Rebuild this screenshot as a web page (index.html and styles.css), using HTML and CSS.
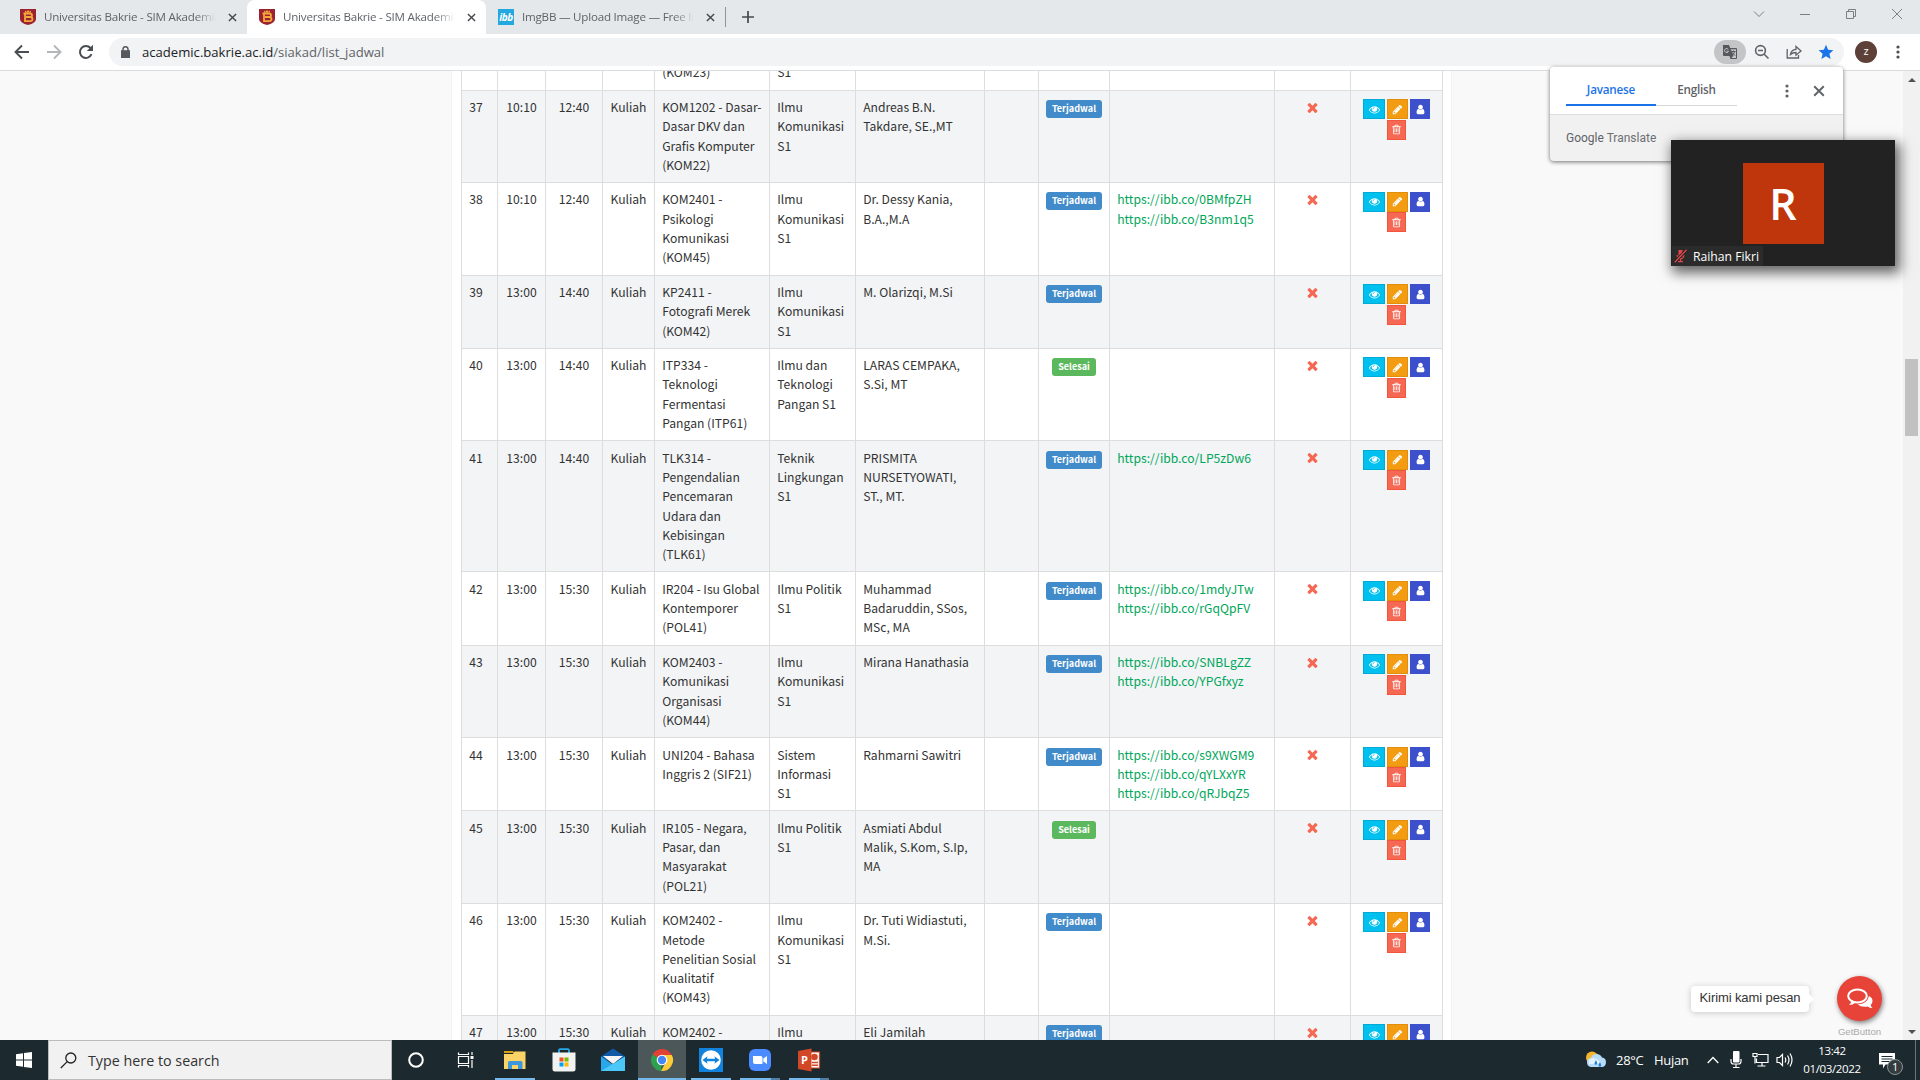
FILE: index.html
```html
<!DOCTYPE html>
<html lang="id">
<head>
    <meta charset="UTF-8">
    <meta name="viewport" content="width=device-width, initial-scale=1.0">
    <title>Universitas Bakrie - SIM Akademik</title>
    <link rel="stylesheet" href="styles.css">
</head>
<body>
    <svg class="sprite">
        <symbol id="eye" viewBox="0 0 1792 1792"><path d="M1664 960q-152-236-381-353 61 104 61 225 0 185-131.500 316.500t-316.500 131.500-316.500-131.500-131.500-316.500q0-121 61-225-229 117-381 353 133 205 333.500 326.500t434.500 121.500 434.500-121.500 333.500-326.500zm-720-384q0-20-14-34t-34-14q-125 0-214.500 89.500t-89.500 214.500q0 20 14 34t34 14 34-14 14-34q0-86 61-147t147-61q20 0 34-14t14-34zm848 384q0 34-20 69-140 230-376.500 368.500t-499.500 138.500-499.500-139-376.500-368q-20-35-20-69t20-69q140-229 376.500-368t499.500-139 499.500 139 376.500 368q20 35 20 69z"/></symbol>
        <symbol id="pencil" viewBox="0 0 1792 1792"><path d="M491 1536l91-91-235-235-91 91v107h128v128h107zm523-928q0-22-22-22-10 0-17 7l-542 542q-7 7-7 17 0 22 22 22 10 0 17-7l542-542q7-7 7-17zm-54-192l416 416-832 832h-416v-416zm683 96q0 53-37 90l-166 166-416-416 166-165q36-38 90-38 53 0 91 38l235 234q37 39 37 91z"/></symbol>
        <symbol id="user" viewBox="0 0 1792 1792"><path d="M1536 1399q0 109-62.500 187t-150.500 78h-854q-88 0-150.500-78t-62.500-187q0-85 8.500-160.500t31.500-152 58.500-131 94-89 134.500-34.500q131 128 313 128t313-128q76 0 134.500 34.500t94 89 58.500 131 31.500 152 8.500 160.500zm-256-887q0 159-112.500 271.500t-271.500 112.500-271.500-112.500-112.500-271.500 112.500-271.500 271.500-112.500 271.500 112.500 112.500 271.500z"/></symbol>
        <symbol id="trash" viewBox="0 0 1792 1792"><path d="M704 736v576q0 14-9 23t-23 9h-64q-14 0-23-9t-9-23v-576q0-14 9-23t23-9h64q14 0 23 9t9 23zm256 0v576q0 14-9 23t-23 9h-64q-14 0-23-9t-9-23v-576q0-14 9-23t23-9h64q14 0 23 9t9 23zm256 0v576q0 14-9 23t-23 9h-64q-14 0-23-9t-9-23v-576q0-14 9-23t23-9h64q14 0 23 9t9 23zm128 724v-948h-896v948q0 22 7 40.500t14.500 27 10.500 8.500h832q3 0 10.500-8.500t14.500-27 7-40.500zm-672-1076h448l-48-117q-7-9-17-11h-317q-10 2-17 11zm928 32v64q0 14-9 23t-23 9h-96v948q0 83-47 143.500t-113 60.500h-832q-66 0-113-58.500t-47-141.500v-952h-96q-14 0-23-9t-9-23v-64q0-14 9-23t23-9h309l70-167q15-37 54-63t79-26h320q40 0 79 26t54 63l70 167h309q14 0 23 9t9 23z"/></symbol>
        <symbol id="times" viewBox="0 0 1792 1792"><path d="M1490 1322q0 40-28 68l-136 136q-28 28-68 28t-68-28l-294-294-294 294q-28 28-68 28t-68-28l-136-136q-28-28-28-68t28-68l294-294-294-294q-28-28-28-68t28-68l136-136q28-28 68-28t68 28l294 294 294-294q28-28 68-28t68 28l136 136q28 28 28 68t-28 68l-294 294 294 294q28 28 28 68z"/></symbol>
        <symbol id="crest" viewBox="0 0 16 16"><path fill="#9b2330" d="M0 0h16v10q0 4-8 6Q0 14 0 10z"/><path fill="none" stroke="#f3a93c" stroke-width="1.800" d="M3.500 4.500h6.500q2 0 2 1.700T10 8H6h4q2.500 0 2.500 2t-2.500 2.200H5V4.500"/><path fill="#f3a93c" d="M5 1.500l1.500 1.200L8 1l1.500 1.700L11 1.500v2H5z"/></symbol>
        <symbol id="close" viewBox="0 0 10 10"><path fill="none" stroke="currentColor" stroke-width="1.600" d="M1 1l8 8M9 1L1 9"/></symbol>
        <symbol id="dots" viewBox="0 0 4 14"><circle cx="2" cy="2" r="1.600"/><circle cx="2" cy="7" r="1.600"/><circle cx="2" cy="12" r="1.600"/></symbol>
    </svg>

    <div class="tab-strip">
        <div class="tab">
            <svg class="favicon"><use href="#crest"/></svg>
            <span class="tab-title">Universitas Bakrie - SIM Akademik</span>
            <svg class="tab-close"><use href="#close"/></svg>
        </div>
        <div class="tab active">
            <svg class="favicon"><use href="#crest"/></svg>
            <span class="tab-title">Universitas Bakrie - SIM Akademik</span>
            <svg class="tab-close"><use href="#close"/></svg>
        </div>
        <div class="tab">
            <span class="favicon ibb">ibb</span>
            <span class="tab-title">ImgBB — Upload Image — Free Image</span>
            <svg class="tab-close"><use href="#close"/></svg>
        </div>
        <div class="new-tab">
            <svg width="12" height="12" viewBox="0 0 12 12"><path stroke="#45494d" stroke-width="1.700" d="M6 0v12M0 6h12"/></svg>
        </div>
        <div class="window-buttons">
            <svg viewBox="0 0 12 12"><path d="M1 3.500l5 5 5-5"/></svg>
            <svg viewBox="0 0 12 12"><path d="M1 6.500h10"/></svg>
            <svg viewBox="0 0 12 12"><path d="M1.500 3.500h7v7h-7zM3.500 3.500v-2h7v7h-2"/></svg>
            <svg viewBox="0 0 12 12"><path d="M1 1l10 10M11 1L1 11"/></svg>
        </div>
    </div>

    <div class="toolbar">
        <div class="nav-buttons">
            <svg width="16" height="16" viewBox="0 0 16 16"><path fill="none" stroke="#4a4d51" stroke-width="1.900" d="M15 8H2M8 1.500L1.500 8 8 14.500"/></svg>
            <svg width="16" height="16" viewBox="0 0 16 16"><path fill="none" stroke="#b4b7ba" stroke-width="1.900" d="M1 8h13M8 1.500L14.500 8 8 14.500"/></svg>
            <svg width="16" height="16" viewBox="0 0 16 16"><path fill="none" stroke="#4a4d51" stroke-width="2" d="M13.500 10.200A6 6 0 1 1 12.500 4L14 5.500"/><path fill="#4a4d51" d="M15 .8v6.200H8.800z"/></svg>
        </div>
        <div class="omnibox">
            <svg class="lock" width="9" height="12" viewBox="0 0 9 12"><path fill="#55595d" d="M0 4.200h9V12H0z"/><path fill="none" stroke="#55595d" stroke-width="1.500" d="M2 5V3a2.500 2.300 0 0 1 5 0v2"/></svg>
            <span class="url"><b>academic.bakrie.ac.id</b>/siakad/list_jadwal</span>
            <div class="omnibox-icons">
                <span class="translate-pill">
                    <svg width="16" height="16" viewBox="0 0 16 16"><path fill="#55595d" d="M1 1h6l1.200 3H14a1 1 0 0 1 1 1v9a1 1 0 0 1-1 1H8.500l-1-3H2a1 1 0 0 1-1-1z"/><path fill="#c3c5c7" d="M8.800 5.200H14V14H9.500l2-2.500z"/><path fill="none" stroke="#c3c5c7" d="M6.300 5.500A2 2 0 1 0 6.500 7.200H4.700"/><path fill="none" stroke="#55595d" d="M9.500 7.500h4M11.500 6.500v1M12.800 7.500q-.8 2.500-2.800 3.500M10.300 8.500l2.700 3"/></svg>
                </span>
                <svg width="16" height="16" viewBox="0 0 16 16"><path fill="none" stroke="#5f6368" stroke-width="1.600" d="M10.200 10.200l4.300 4.300M4 6.500h5"/><circle cx="6.500" cy="6.500" r="4.900" fill="none" stroke="#5f6368" stroke-width="1.600"/></svg>
                <svg width="16" height="16" viewBox="0 0 16 16"><path fill="none" stroke="#5f6368" stroke-width="1.300" d="M1.200 5v9h11.300v-3M4.500 10.500Q5 5.800 10 5.300V2.500L15 7l-5 4.200V8.500q-3.500 0-5.500 2z"/></svg>
                <svg width="16" height="16" viewBox="0 0 16 16"><path fill="#1a73e8" d="M8 .8l2.100 5 5.300.4-4 3.500 1.200 5.300L8 12.200 3.400 15l1.200-5.300-4-3.500 5.300-.4z"/></svg>
            </div>
        </div>
        <span class="avatar">z</span>
        <svg class="menu-dots" width="4" height="14"><use href="#dots"/></svg>
    </div>

    <div class="viewport">
        <div class="page">
            <div class="box">
                <table class="schedule">
                    <colgroup>
                        <col class="c-no"><col class="c-start"><col class="c-end"><col class="c-type">
                        <col class="c-course"><col class="c-prodi"><col class="c-lecturer"><col class="c-room">
                        <col class="c-status"><col class="c-proof"><col class="c-check"><col class="c-action">
                    </colgroup>
                    <tbody id="rows">
                        <!-- Schedule rows will be inserted here -->
                    </tbody>
                </table>
            </div>
        </div>
        <div class="scrollbar">
            <span class="arrow up"></span>
            <span class="thumb"></span>
            <span class="arrow down"></span>
        </div>

        <div class="chat">
            <span class="chat-tip">Kirimi kami pesan</span>
            <div class="chat-button">
                <svg width="26" height="22" viewBox="0 0 26 22"><path fill="#fff" d="M22 8q3.500 1.500 3.500 5 0 2.300-1.800 4 .3 1.800 1.800 3-3 0-4.700-1.500-6.300 1.200-10.300-2.300Q20 16.500 22 8z"/><ellipse cx="10.500" cy="8" rx="9.300" ry="6.600" fill="#e84339" stroke="#fff" stroke-width="2"/><path fill="#fff" d="M4.500 12.500Q4.500 15 2 17q4 0 6.500-2.500z"/></svg>
            </div>
            <span class="chat-brand">GetButton</span>
        </div>
    </div>

    <div class="translate">
        <div class="translate-head">
            <span class="lang on">Javanese</span>
            <span class="lang">English</span>
            <svg class="translate-dots" width="4" height="14"><use href="#dots"/></svg>
            <svg class="translate-close" width="12" height="12"><use href="#close"/></svg>
        </div>
        <div class="translate-foot"><b>Google</b> Translate</div>
    </div>

    <div class="meeting">
        <span class="meeting-avatar">R</span>
        <span class="meeting-name">
            <svg width="13" height="14" viewBox="0 0 13 14"><path fill="#e0484d" d="M4.500 1h4v7h-4zM2.500 6h1.200q0 3 2.800 3t2.800-3h1.200q0 3.500-3.300 4.200V12H9v1.200H4V12h1.800v-1.800Q2.500 9.500 2.500 6z"/><path stroke="#222" stroke-width="3" d="M.8 13.200L12.500.8"/><path stroke="#e0484d" stroke-width="1.400" d="M.8 13.200L12.500.8"/></svg>
            Raihan Fikri
        </span>
    </div>

    <div class="taskbar">
        <div class="start">
            <svg width="16" height="16" viewBox="0 0 16 16"><path fill="#fff" d="M0 2.200l7-1v6.300H0zM8 1l8-1v7.500H8zM0 8.500h7v6.300l-7-1zM8 8.500h8V16l-8-1z"/></svg>
        </div>
        <div class="search">
            <svg width="17" height="17" viewBox="0 0 17 17"><circle cx="10.800" cy="6" r="5" fill="none" stroke="#222" stroke-width="1.300"/><path stroke="#222" stroke-width="1.300" d="M7.200 9.600L.8 16"/></svg>
            <span>Type here to search</span>
        </div>
        <div class="apps">
            <div class="app system"><svg width="18" height="18" viewBox="0 0 18 18"><circle cx="9" cy="9" r="6.800" fill="none" stroke="#fff" stroke-width="2"/></svg></div>
            <div class="app system"><svg width="18" height="18" viewBox="0 0 18 18"><path fill="none" stroke="#fff" stroke-width="1.200" d="M1.500 1.500v2h10v-2M1.500 16.500v-2h10v2M1.500 5.500h10v7h-10zM15 1v3M15 9v8"/><path fill="#fff" d="M13.500 5h3v3h-3z"/></svg></div>
            <div class="app running"><svg width="22" height="20" viewBox="0 0 22 20"><path fill="#d9a013" d="M0 1h9l1.500 2H0z"/><path fill="#fbd468" d="M0 4h9l1.500-2.500H21.500V19H0z"/><path fill="#3d97dc" d="M4 19v-6.500q0-1.500 1.500-1.500H17q1.500 0 1.500 1.500V19H14v-4H8v4z"/></svg></div>
            <div class="app"><svg width="24" height="24" viewBox="0 0 24 24"><path fill="none" stroke="#27a8e8" stroke-width="1.800" d="M7 6V2.500Q7 1.200 8.200 1.200h7.600Q17 1.200 17 2.500V6"/><path fill="#f2f2f2" d="M.5 4.500h23V21q0 2.500-2.500 2.500H3Q.5 23.500.5 21z"/><path fill="#f25022" d="M7.500 9.500h4v4h-4z"/><path fill="#7fba00" d="M12.500 9.500h4v4h-4z"/><path fill="#00a4ef" d="M7.500 14.500h4v4h-4z"/><path fill="#ffb900" d="M12.500 14.500h4v4h-4z"/></svg></div>
            <div class="app"><svg width="24" height="24" viewBox="0 0 24 24"><path fill="#0f5aa8" d="M0 8.500L12 .5l12 8V12H0z"/><path fill="#f4f4f4" d="M2 8h20l-10 8z"/><path fill="#28a8ea" d="M0 8.500L14 18v5H0z"/><path fill="#4cc8f8" d="M24 8.500V23H0z"/></svg></div>
            <div class="app current"><svg width="24" height="24" viewBox="0 0 24 24"><path fill="#e04336" d="M12 12L2.500 6.500a11 11 0 0 1 19 0z"/><path fill="#2da14d" d="M12 12L11 23A11 11 0 0 1 2.500 6.500z"/><path fill="#fccb35" d="M12 7h9.800A11 11 0 0 1 11 23l5-9z"/><circle cx="12" cy="12" r="5.300" fill="#fff"/><circle cx="12" cy="12" r="4.200" fill="#4486f4"/></svg></div>
            <div class="app running"><svg width="24" height="24" viewBox="0 0 24 24"><path fill="#1283dc" d="M0 0h24v24H0z"/><circle cx="12" cy="12" r="9.800" fill="#fff"/><path fill="#1283dc" d="M3.500 12l5-3.800-.6 2.600h8.200l-.6-2.600 5 3.800-5 3.800.6-2.600H7.900l.6 2.600z"/></svg></div>
            <div class="app running stacked"><svg width="22" height="22" viewBox="0 0 22 22"><rect width="22" height="22" rx="6" fill="#4a8cff"/><path fill="#fff" d="M4 7h7.500q2 0 2 2v6H6q-2 0-2-2zM14.300 9.500L18 7v8l-3.700-2.500z"/></svg></div>
            <div class="app running stacked"><svg width="24" height="24" viewBox="0 0 24 24"><path fill="#fff" stroke="#d24726" stroke-width="1.200" d="M13 4h9.500v16H13z"/><path stroke="#d24726" stroke-width="1.500" d="M15 14.500h6M15 17.300h6"/><circle cx="17.500" cy="9" r="3.300" fill="#d24726"/><path fill="#d24726" d="M1 3l13.500-2.500v23L1 21z"/></svg><span class="ppt-letter">P</span></div>
        </div>
        <div class="tray">
            <svg class="weather" width="22" height="18" viewBox="0 0 22 18"><circle cx="7" cy="6.500" r="6" fill="#f7b52e"/><path fill="#b7dcf7" d="M6 16a4.700 4.700 0 0 1 0-9.300A6 6 0 0 1 17 6.500a4.800 4.800 0 0 1-.3 9.500z"/><path fill="#e3f2fd" d="M4 9q4-4 9 0 4 3-1 4H4z"/><path fill="#2380d6" d="M9.500 12l1.500-3 1.200 3a1.400 1.400 0 1 1-2.700 0zM13.500 14l1.500-3 1.200 3a1.400 1.400 0 1 1-2.700 0z"/></svg>
            <span class="temp">28°C</span>
            <span class="sky">Hujan</span>
            <svg class="caret" width="12" height="8" viewBox="0 0 12 8"><path fill="none" stroke="#fff" stroke-width="1.300" d="M.7 7L6 1.500 11.300 7"/></svg>
            <svg class="mic" width="12" height="18" viewBox="0 0 12 18"><rect x="3" y="0" width="6.500" height="11.500" rx="1" fill="#fff"/><path fill="none" stroke="#fff" stroke-width="1.200" d="M1 8v2.500q0 2.500 2.500 2.500h5q2.500 0 2.500-2.500V8M6 13v3M3 16.500h6.500"/></svg>
            <svg class="net" width="17" height="16" viewBox="0 0 17 16"><path fill="none" stroke="#fff" stroke-width="1.200" d="M6 2.500h10v8H4.500v-4M10 10.500v3M5.500 14h8M1 1.500h4v3H1zM3 4.500v7"/></svg>
            <svg class="vol" width="17" height="16" viewBox="0 0 17 16"><path fill="none" stroke="#fff" stroke-width="1.200" d="M1 5.500h2.500l3-3v11l-3-3H1zM9 5.500q1.500 2.500 0 5M11.500 3.500q3 4.500 0 9M14 1.500q4 6.500 0 13"/></svg>
            <div class="clock"><span>13:42</span><span>01/03/2022</span></div>
            <div class="notice">
                <svg width="16" height="17" viewBox="0 0 16 17"><path fill="#fff" d="M0 1h16v11.500H6.500L4 16.500v-4H0z"/><path stroke="#1c2a2f" d="M2.500 4.500h11M2.500 7h11M2.500 9.500h8"/></svg>
                <span class="notice-count">1</span>
            </div>
        </div>
    </div>

    <script>
        // Class schedule, one entry per meeting
        const schedule = [
            { no: 36, start: '10:10', end: '12:40', course: ['KOM1202 - Dasar', 'DKV', '(KOM23)'], prodi: ['Ilmu', 'Komunikasi', 'S1'], lecturer: [], done: false, proof: [] },
            { no: 37, start: '10:10', end: '12:40', course: ['KOM1202 - Dasar-', 'Dasar DKV dan', 'Grafis Komputer', '(KOM22)'], prodi: ['Ilmu', 'Komunikasi', 'S1'], lecturer: ['Andreas B.N.', 'Takdare, SE.,MT'], done: false, proof: [] },
            { no: 38, start: '10:10', end: '12:40', course: ['KOM2401 -', 'Psikologi', 'Komunikasi', '(KOM45)'], prodi: ['Ilmu', 'Komunikasi', 'S1'], lecturer: ['Dr. Dessy Kania,', 'B.A.,M.A'], done: false, proof: ['https://ibb.co/0BMfpZH', 'https://ibb.co/B3nm1q5'] },
            { no: 39, start: '13:00', end: '14:40', course: ['KP2411 -', 'Fotografi Merek', '(KOM42)'], prodi: ['Ilmu', 'Komunikasi', 'S1'], lecturer: ['M. Olarizqi, M.Si'], done: false, proof: [] },
            { no: 40, start: '13:00', end: '14:40', course: ['ITP334 -', 'Teknologi', 'Fermentasi', 'Pangan (ITP61)'], prodi: ['Ilmu dan', 'Teknologi', 'Pangan S1'], lecturer: ['LARAS CEMPAKA,', 'S.Si, MT'], done: true, proof: [] },
            { no: 41, start: '13:00', end: '14:40', course: ['TLK314 -', 'Pengendalian', 'Pencemaran', 'Udara dan', 'Kebisingan', '(TLK61)'], prodi: ['Teknik', 'Lingkungan', 'S1'], lecturer: ['PRISMITA', 'NURSETYOWATI,', 'ST., MT.'], done: false, proof: ['https://ibb.co/LP5zDw6'] },
            { no: 42, start: '13:00', end: '15:30', course: ['IR204 - Isu Global', 'Kontemporer', '(POL41)'], prodi: ['Ilmu Politik', 'S1'], lecturer: ['Muhammad', 'Badaruddin, SSos,', 'MSc, MA'], done: false, proof: ['https://ibb.co/1mdyJTw', 'https://ibb.co/rGqQpFV'] },
            { no: 43, start: '13:00', end: '15:30', course: ['KOM2403 -', 'Komunikasi', 'Organisasi', '(KOM44)'], prodi: ['Ilmu', 'Komunikasi', 'S1'], lecturer: ['Mirana Hanathasia'], done: false, proof: ['https://ibb.co/SNBLgZZ', 'https://ibb.co/YPGfxyz'] },
            { no: 44, start: '13:00', end: '15:30', course: ['UNI204 - Bahasa', 'Inggris 2 (SIF21)'], prodi: ['Sistem', 'Informasi', 'S1'], lecturer: ['Rahmarni Sawitri'], done: false, proof: ['https://ibb.co/s9XWGM9', 'https://ibb.co/qYLXxYR', 'https://ibb.co/qRJbqZ5'] },
            { no: 45, start: '13:00', end: '15:30', course: ['IR105 - Negara,', 'Pasar, dan', 'Masyarakat', '(POL21)'], prodi: ['Ilmu Politik', 'S1'], lecturer: ['Asmiati Abdul', 'Malik, S.Kom, S.Ip,', 'MA'], done: true, proof: [] },
            { no: 46, start: '13:00', end: '15:30', course: ['KOM2402 -', 'Metode', 'Penelitian Sosial', 'Kualitatif', '(KOM43)'], prodi: ['Ilmu', 'Komunikasi', 'S1'], lecturer: ['Dr. Tuti Widiastuti,', 'M.Si.'], done: false, proof: [] },
            { no: 47, start: '13:00', end: '15:30', course: ['KOM2402 -', 'Metode', 'Penelitian Sosial'], prodi: ['Ilmu', 'Komunikasi', 'S1'], lecturer: ['Eli Jamilah'], done: false, proof: [] }
        ];

        const icon = name => `<svg><use href="#${name}"/></svg>`;

        function showRows() {
            const tableBody = document.getElementById('rows');
            schedule.forEach(item => {
                const label = item.done
                    ? '<span class="label label-success">Selesai</span>'
                    : '<span class="label label-primary">Terjadwal</span>';
                const row = `
                    <tr>
                        <td>${item.no}</td>
                        <td class="center">${item.start}</td>
                        <td class="center">${item.end}</td>
                        <td class="center">Kuliah</td>
                        <td>${item.course.join('<br>')}</td>
                        <td>${item.prodi.join('<br>')}</td>
                        <td>${item.lecturer.join('<br>')}</td>
                        <td></td>
                        <td class="center">${label}</td>
                        <td>${item.proof.map(url => `<a class="proof">${url}</a>`).join('<br>')}</td>
                        <td class="center cross">${icon('times')}</td>
                        <td>
                            <div class="actions">
                                <span class="btn btn-info">${icon('eye')}</span>
                                <span class="btn btn-warning">${icon('pencil')}</span>
                                <span class="btn btn-user">${icon('user')}</span>
                                <span class="btn btn-danger">${icon('trash')}</span>
                            </div>
                        </td>
                    </tr>
                `;
                tableBody.insertAdjacentHTML('beforeend', row);
            });
        }

        showRows();
    </script>
</body>
</html>
```
FILE: styles.css
```css
* {
    box-sizing: border-box;
}
body {
    margin: 0;
    width: 1920px;
    height: 1080px;
    overflow: hidden;
    position: relative;
    display: flex;
    flex-direction: column;
    font-family: "Open Sans", "Noto Sans", sans-serif;
    background-color: #f9f9f9;
    color: #333;
}
svg {
    display: block;
    flex: none;
}
.sprite {
    position: absolute;
    width: 0;
    height: 0;
}

/* Browser tabs */
.tab-strip {
    flex: none;
    height: 34px;
    display: flex;
    align-items: stretch;
    padding-left: 8px;
    background-color: #e4e8eb;
}
.tab {
    width: 239px;
    padding: 0 10px 0 12px;
    display: flex;
    align-items: center;
    color: #5f6368;
    font-size: 11.6px;
    letter-spacing: -0.22px;
}
.tab.active {
    background-color: #fff;
    border-radius: 8px 8px 0 0;
}
.favicon {
    width: 16px;
    height: 16px;
    margin-right: 8px;
    flex: none;
}
.ibb {
    background-color: #24a8e0;
    color: #fff;
    font: italic bold 10px/16px "Open Sans", sans-serif;
    letter-spacing: -0.5px;
    text-align: center;
}
.tab-title {
    flex: 1;
    padding-bottom: 1px;
    overflow: hidden;
    white-space: nowrap;
    -webkit-mask-image: linear-gradient(90deg, #000 88%, transparent);
    mask-image: linear-gradient(90deg, #000 88%, transparent);
}
.tab-close {
    width: 9px;
    height: 9px;
    margin: 0 0 0 12px;
    color: #45494d;
}
.new-tab {
    height: 20px;
    margin-top: 7px;
    padding: 4px 0 0 16px;
    border-left: 1px solid #8f9498;
}
.window-buttons {
    margin-left: auto;
    width: 184px;
    display: flex;
    align-items: center;
    padding-bottom: 6px;
}
.window-buttons svg {
    width: 12px;
    height: 12px;
    margin: 0 17px;
    fill: none;
    stroke: #7a7f84;
}

/* Address bar */
.toolbar {
    flex: none;
    height: 37px;
    display: flex;
    align-items: center;
    padding: 0 20px 0 14px;
    background-color: #fff;
    border-bottom: 1px solid #d9dbdd;
}
.nav-buttons {
    display: flex;
    gap: 16px;
    margin-right: 15px;
}
.omnibox {
    flex: 1;
    height: 28px;
    border-radius: 14px;
    background-color: #f1f3f4;
    display: flex;
    align-items: center;
    padding: 0 10px 0 12px;
}
.url {
    margin-left: 12px;
    font-size: 13.1px;
    letter-spacing: 0;
    color: #5f6368;
}
.url b {
    font-weight: 400;
    color: #202124;
}
.omnibox-icons {
    margin-left: auto;
    display: flex;
    align-items: center;
    gap: 16px;
}
.translate-pill {
    width: 32px;
    height: 24px;
    margin-right: -8px;
    border-radius: 12px;
    background-color: #c3c5c7;
    display: flex;
    align-items: center;
    justify-content: center;
}
.avatar {
    width: 22px;
    height: 22px;
    margin: 0 19px 0 11px;
    border-radius: 50%;
    background-color: #5d4037;
    color: #fff;
    font-size: 11px;
    line-height: 20px;
    text-align: center;
}
.menu-dots {
    fill: #4a4d51;
}

/* Schedule page */
.viewport {
    flex: 1;
    min-height: 0;
    display: flex;
    overflow: hidden;
    position: relative;
}
.page {
    flex: 1;
    overflow: hidden;
}
.box {
    display: flow-root;
    width: 999px;
    margin: 0 auto;
    padding: 0 9px;
    height: 100%;
    background-color: #fff;
    box-shadow: 0 0 1px rgba(0, 0, 0, 0.15);
}
.schedule {
    width: 982px;
    margin-top: -54.7px;
    table-layout: fixed;
    border-collapse: collapse;
    font-family: "Noto Sans CJK SC", sans-serif;
    font-size: 12.15px;
    line-height: 19.28px;
}
.schedule td {
    padding: 6.4px 6px 8px 7.2px;
    border: 1px solid #ddd;
    vertical-align: top;
    white-space: nowrap;
}
.schedule tr {
    background-color: #fff;
}
.schedule tr:nth-child(even) {
    background-color: #f2f4f6;
}
.schedule td.center {
    padding-right: 2px;
    padding-left: 2px;
    text-align: center;
}
.c-no { width: 36px; }
.c-start { width: 48px; }
.c-end { width: 57px; }
.c-type { width: 52px; }
.c-course { width: 115px; }
.c-prodi { width: 86px; }
.c-lecturer { width: 129px; }
.c-room { width: 54px; }
.c-status { width: 71px; }
.c-proof { width: 165px; }
.c-check { width: 76px; }
.c-action { width: 92px; }
.label {
    display: inline-block;
    width: 56px;
    height: 18px;
    margin-top: 3px;
    border-radius: 3px;
    color: #fff;
    font-size: 9.1px;
    font-weight: 700;
    line-height: 17px;
    vertical-align: top;
}
.label-primary {
    background-color: #428bca;
}
.label-success {
    width: 44px;
    background-color: #5cb85c;
}
.proof {
    color: #00a65a;
}
.cross svg {
    width: 15px;
    height: 15px;
    margin: 2.7px auto 0;
    fill: #f56954;
}
.actions {
    display: flex;
    flex-wrap: wrap;
    justify-content: center;
    gap: 0.4px 2px;
    margin: 2.2px -2px 0 -3px;
}
.btn {
    height: 20px;
    border: 1px solid;
    display: flex;
    align-items: center;
    justify-content: center;
}
.btn svg {
    width: 11px;
    height: 11px;
    fill: #fff;
}
.btn-info {
    width: 22px;
    background-color: #00c0ef;
    border-color: #00acd6;
}
.btn-warning {
    width: 21px;
    background-color: #f39c12;
    border-color: #e08e0b;
}
.btn-user {
    width: 20px;
    background-color: #3c50cc;
    border-color: #3c50cc;
}
.btn-danger {
    width: 19px;
    background-color: #f56954;
    border-color: #f4543c;
}

/* Scrollbar */
.scrollbar {
    width: 17px;
    background-color: #f1f1f1;
    display: flex;
    flex-direction: column;
    align-items: center;
    padding: 7px 0 6px;
}
.arrow {
    width: 0;
    height: 0;
    border: 4px solid transparent;
}
.arrow.up {
    border-top: 0;
    border-bottom-color: #505050;
}
.arrow.down {
    margin-top: auto;
    border-bottom: 0;
    border-top-color: #505050;
}
.thumb {
    width: 13px;
    height: 77px;
    margin-top: 277px;
    background-color: #c1c1c1;
}

/* Chat widget */
.chat {
    position: absolute;
    right: 38px;
    bottom: 1px;
    display: grid;
    grid-template-columns: 118px 45px;
    column-gap: 28px;
    align-items: center;
}
.chat-tip {
    position: relative;
    height: 26px;
    border-radius: 4px;
    background-color: #fff;
    box-shadow: 0 1px 6px rgba(0, 0, 0, 0.2);
    color: #333;
    font: 13px/24px "Liberation Sans", sans-serif;
    letter-spacing: -0.1px;
    text-align: center;
}
.chat-tip::after {
    content: "";
    position: absolute;
    right: -5px;
    top: 8px;
    border: 5px solid transparent;
    border-right: 0;
    border-left-color: #fff;
}
.chat-button {
    width: 45px;
    height: 45px;
    border-radius: 50%;
    background-color: #e84339;
    box-shadow: 1px 2px 5px rgba(0, 0, 0, 0.5);
    display: flex;
    align-items: center;
    justify-content: center;
}
.chat-brand {
    grid-column: 2;
    height: 18px;
    font: 9.6px/22px "Liberation Sans", sans-serif;
    color: #aaa;
    text-align: center;
}

/* Translate bubble */
.translate {
    position: absolute;
    left: 1550px;
    top: 67px;
    width: 293px;
    height: 94px;
    border-radius: 4px;
    background-color: #f1f1f1;
    box-shadow: 0 1px 4px rgba(0, 0, 0, 0.55);
    overflow: hidden;
}
.translate-head {
    height: 48px;
    display: flex;
    align-items: center;
    padding: 0 18px 0 16px;
    background-color: #fff;
    border-bottom: 1px solid #ddd;
}
.lang {
    width: 81px;
    height: 30px;
    border-bottom: 1px solid #d5d7d9;
    color: #5f6368;
    font-size: 11.7px;
    font-weight: 600;
    line-height: 27px;
    letter-spacing: -0.2px;
    text-align: center;
}
.lang.on {
    width: 90px;
    border-bottom: 2px solid #1a73e8;
    color: #1a73e8;
}
.translate-dots {
    margin-left: auto;
    fill: #5f6368;
}
.translate-close {
    margin-left: 24px;
    color: #5f6368;
}
.translate-foot {
    padding-left: 16px;
    font: 12px/46px Roboto, sans-serif;
    color: #6b6f73;
}
.translate-foot b {
    font-weight: 400;
    color: #5f6368;
}

/* Meeting window */
.meeting {
    position: absolute;
    left: 1671px;
    top: 140px;
    width: 224px;
    height: 126px;
    background-color: #222;
    box-shadow: 3px 5px 12px 2px rgba(0, 0, 0, 0.6);
    display: flex;
    flex-direction: column;
    align-items: center;
    padding-top: 23px;
}
.meeting-avatar {
    width: 81px;
    height: 81px;
    flex: none;
    background-color: #bf360c;
    color: #fff;
    font: 600 43px/82px "Open Sans", sans-serif;
    text-align: center;
}
.meeting-name {
    align-self: flex-start;
    height: 20px;
    margin: 2px 0 0 1px;
    padding: 0 4px 0 2px;
    display: flex;
    align-items: center;
    gap: 6px;
    background-color: #2b2b2b;
    color: #fff;
    font-size: 12.2px;
}

/* Taskbar */
.taskbar {
    flex: none;
    height: 40px;
    display: flex;
    background-color: #1c2a2f;
    color: #fff;
}
.start {
    width: 48px;
    padding: 12px 16px;
}
.search {
    width: 344px;
    display: flex;
    align-items: center;
    gap: 11px;
    padding-left: 11px;
    border: 1px solid #bbb;
    background-color: #f1f1f1;
    color: #333;
    font-size: 14.3px;
}
.apps {
    display: flex;
    gap: 1px;
}
.app {
    width: 48px;
    position: relative;
    display: flex;
    align-items: center;
    justify-content: center;
}
.app.system {
    margin-right: 0.5px;
}
.app.current {
    background-color: #4b5759;
}
.running::after,
.current::after {
    content: "";
    position: absolute;
    left: 4px;
    bottom: 0;
    width: 40px;
    height: 2px;
    background-color: #76b9ed;
}
.current::after {
    left: 0;
    width: 48px;
}
.stacked::after {
    background: linear-gradient(90deg, #76b9ed 31px, #507fa5 31px);
}
.ppt-letter {
    position: absolute;
    left: 16px;
    top: 12px;
    font-size: 11px;
    font-weight: 700;
    line-height: 16px;
}
.tray {
    margin-left: auto;
    width: 336px;
    display: flex;
    align-items: center;
    font-size: 13px;
    letter-spacing: -0.3px;
    border-right: 1px solid #6b7578;
    margin-right: 4px;
}
.weather {
    margin-left: 5px;
}
.temp {
    width: 31px;
    margin-left: 9px;
}
.sky {
    width: 38px;
    margin-left: 7px;
}
.caret {
    margin-left: 15px;
}
.mic {
    margin-left: 11px;
}
.net {
    margin-left: 10px;
}
.vol {
    margin-left: 7px;
}
.clock {
    width: 62px;
    margin-left: 8px;
    display: flex;
    flex-direction: column;
    align-items: center;
    font-size: 11.5px;
    line-height: 18px;
    letter-spacing: -0.35px;
}
.notice {
    position: relative;
    margin-left: 16px;
}
.notice-count {
    position: absolute;
    left: 8px;
    top: 7px;
    width: 16px;
    height: 16px;
    border: 1px solid #8b9295;
    border-radius: 50%;
    background-color: #333d40;
    font-size: 11px;
    line-height: 14px;
    text-align: center;
}
```
